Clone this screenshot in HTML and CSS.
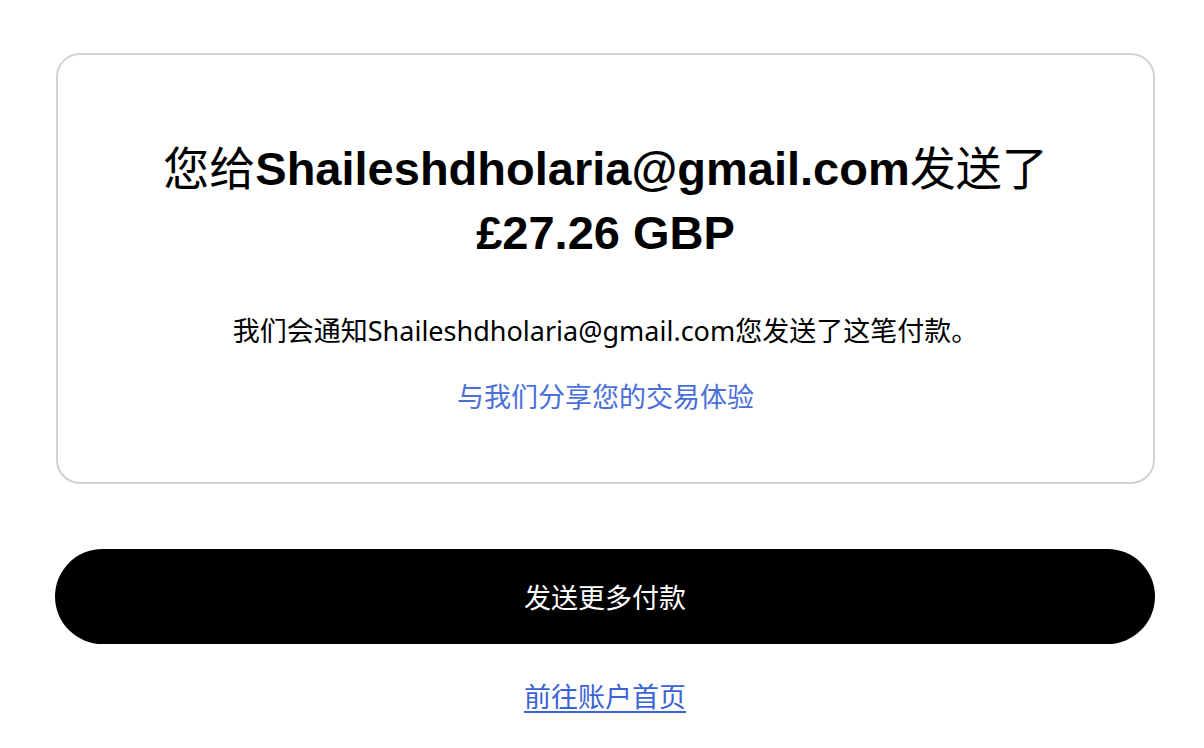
FILE: index.html
```html
<!DOCTYPE html>
<html lang="zh-CN">
<head>
    <meta charset="UTF-8">
    <meta name="viewport" content="width=device-width, initial-scale=1.0">
    <title>付款已发送</title>
    <link rel="stylesheet" href="styles.css">
</head>
<body>
    <div class="page">
        <div class="card">
            <h1 class="title">您给<b>Shaileshdholaria@gmail.com</b>发送了<br><b>£27.26 GBP</b></h1>
            <p class="note">我们会通知Shaileshdholaria@gmail.com您发送了这笔付款。</p>
            <a class="feedback" href="#">与我们分享您的交易体验</a>
        </div>
        <button class="send-more">发送更多付款</button>
        <a class="home-link" href="#">前往账户首页</a>
    </div>
</body>
</html>
```

FILE: styles.css
```css
body {
    margin: 0;
    font-family: "Liberation Sans", Arial, "Noto Sans CJK SC", sans-serif;
    color: #000;
    background: #fff;
}
.page {
    width: 1100px;
    margin-left: 55px;
    padding-top: 53px;
    display: flex;
    flex-direction: column;
    align-items: center;
}
.card {
    box-sizing: border-box;
    width: 1099px;
    margin-left: 1px;
    height: 431px;
    border: 2px solid #d2d2d2;
    border-radius: 24px;
    padding-top: 80px;
    display: flex;
    flex-direction: column;
    align-items: center;
    text-align: center;
}
.title {
    margin: 0;
    font-size: 46px;
    line-height: 60px;
    font-weight: normal;
    font-family: "Noto Sans CJK SC", sans-serif;
}
.title b {
    font-family: "Liberation Sans", Arial, sans-serif;
    font-size: 47px;
    font-weight: bold;
}
.note {
    margin: 50px 0 0;
    font-size: 27px;
    line-height: 36px;
    font-family: "Noto Sans", "Noto Sans CJK SC", sans-serif;
}
.feedback {
    margin-top: 29px;
    font-size: 27px;
    line-height: 36px;
    color: #4a6fd8;
    text-decoration: none;
    font-family: "Noto Sans CJK SC", sans-serif;
}
.send-more {
    margin-top: 65px;
    width: 1100px;
    height: 95px;
    border: none;
    border-radius: 48px;
    background: #000;
    color: #fff;
    font-size: 27px;
    font-family: "Noto Sans CJK SC", sans-serif;
    cursor: pointer;
}
.home-link {
    margin-top: 34px;
    font-size: 27px;
    line-height: 36px;
    color: #3a63d6;
    text-decoration: underline;
    text-underline-offset: 4px;
    font-family: "Noto Sans CJK SC", sans-serif;
}
```
